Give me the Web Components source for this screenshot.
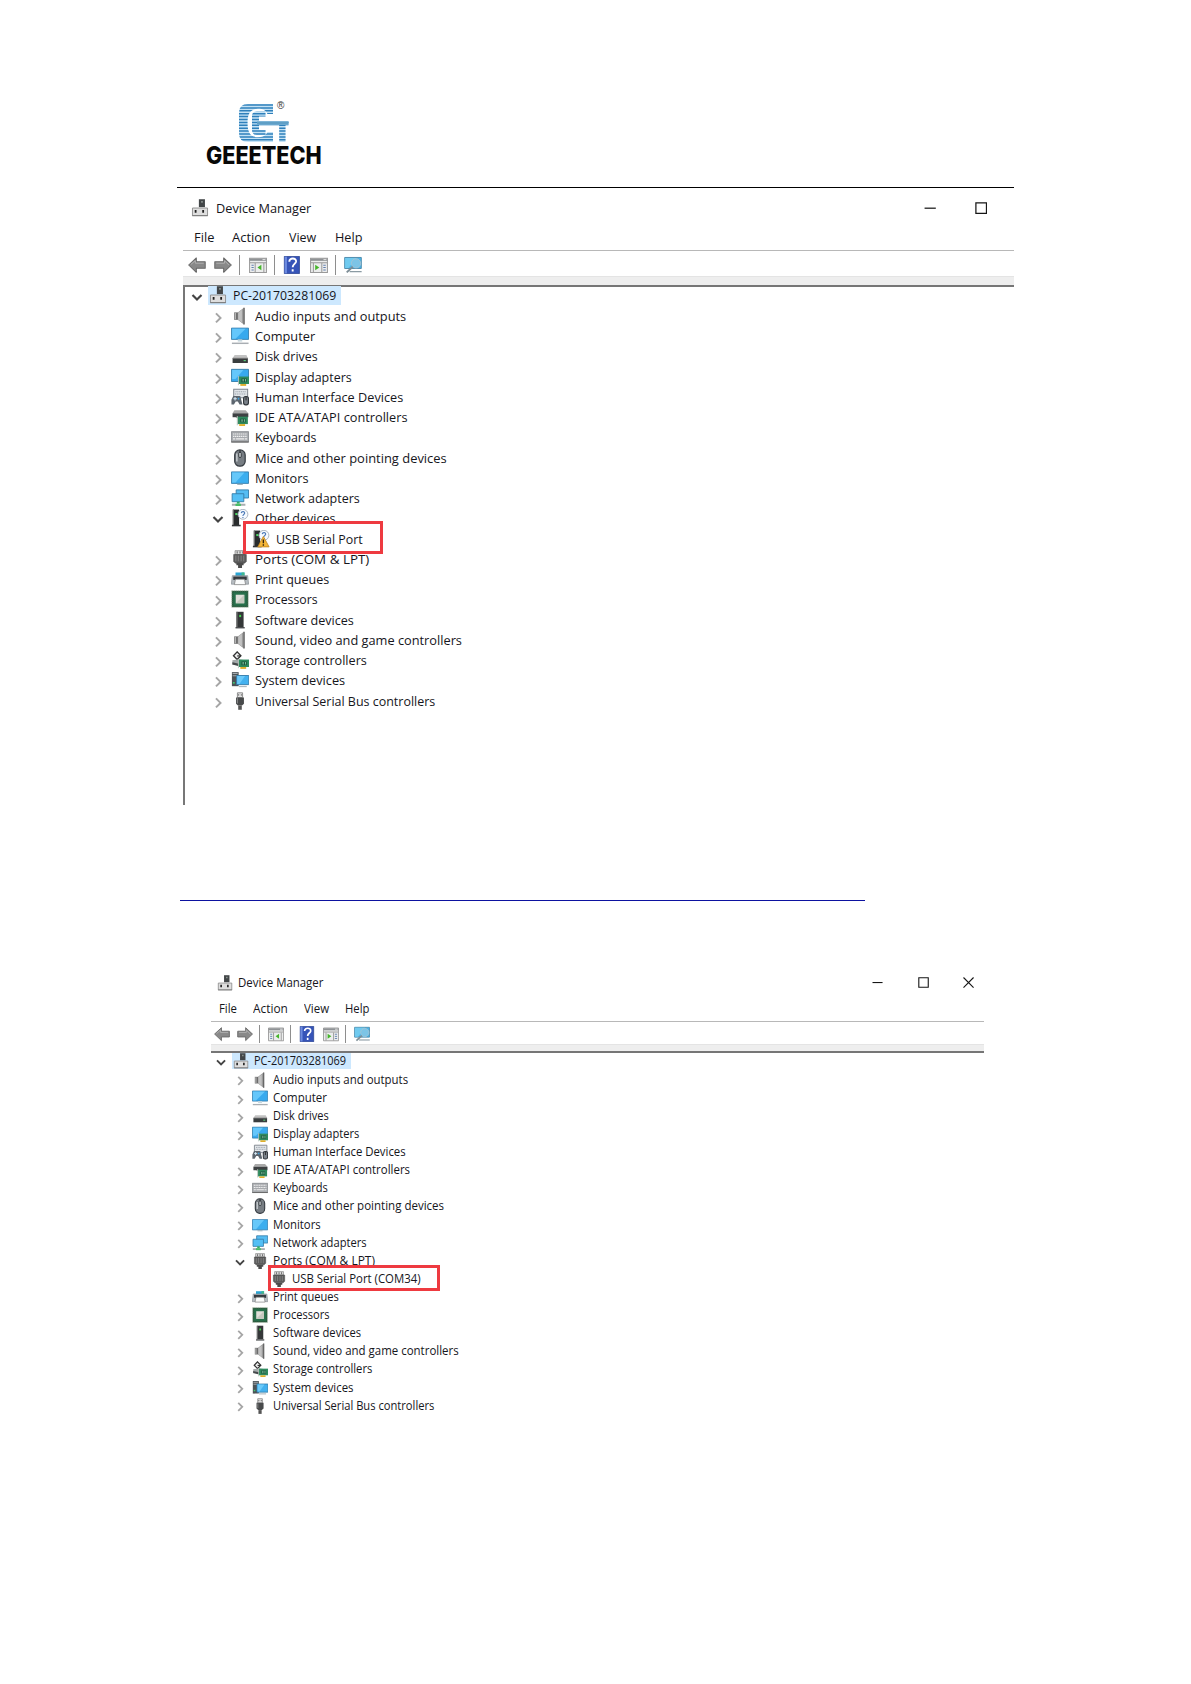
<!DOCTYPE html>
<html lang="en">
<head>
<meta charset="utf-8">
<title>Device Manager</title>
<style>
  body {
    margin: 0;
    background: #fff;
    font-family: "Open Sans", "Noto Sans", sans-serif;
    color: #16161c;
  }
</style>
</head>
<body>
<manual-page>
  <geeetech-logo slot="header"></geeetech-logo>
  <device-manager scale="1.1257" width="831" height="613.2" framed open="other"></device-manager>
  <link-rule></link-rule>
  <device-manager class="second" scale="1.0063" width="773" height="470" closable open="ports"></device-manager>
</manual-page>

<script>
(() => {
  "use strict";

  const svg = (body, box = "0 0 16 16") =>
    `<svg viewBox="${box}" aria-hidden="true">${body}</svg>`;

  const board = `
    <path d="M6.8 7.6h9.2v6.6H6.8z" fill="#2f8a5e"/>
    <path d="M6.6 7v8.300" stroke="#b9c4bb" stroke-width=".8"/>
    <path d="M9.300 9.300h4.700v3.300H9.300z" fill="#1c553d"/>
    <path d="M10.300 9.800h1v2.300h-1zM12.500 9.800h.8v2.300h-.8z" fill="#83c7a0"/>
    <path d="M8.300 14.200h5.200v1.700H8.300z" fill="#dfaf2c"/>`;

  const speaker = `
    <path d="M2.8 4.8h3.400v6.600H2.800z" fill="#6c6c6c"/>
    <path d="M3.300 5.200h1.200v5.800H3.300z" fill="#b5b5b5"/>
    <path d="M6 4.800L11.400.6v15L6 11.400z" fill="#9b9b9b"/>
    <path d="M6.400 5L9.700 2.400v11.400L6.400 11.200z" fill="#c2c2c2"/>
    <path d="M11.600.6v15" stroke="#666" stroke-width="1.300"/>`;

  const tower = `
    <path d="M1.6.5h5.6v14H1.6z" fill="#292c2d"/>
    <path d="M1.6.5h1v14h-1z" fill="#777"/>
    <path d="M3.8 3.6h1.9v1.8H3.8z" fill="#4cdb63"/>
    <path d="M.8 14h7.800v1.400H.8z" fill="#343638"/>`;

  const question = `
    <circle cx="10.6" cy="4.7" r="4.4" fill="#f6faff" stroke="#98a3b2" stroke-width=".7"/>
    <path d="M9.1 3.7c.2-2 3.4-1.8 3 .1-.2 1-1.5 1.1-1.5 2.4M10.6 7v1" fill="none" stroke="#4b79b7" stroke-width="1"/>`;

  const plug = `
    <path d="M3.600.6h8.800v3.400H3.600z" fill="#ddd" stroke="#777" stroke-width=".6"/>
    <path d="M5.5 1.2v2M8 1.2v2M10.5 1.2v2" stroke="#555" stroke-width=".8"/>
    <path d="M2.4 4h11.2v6.2l-1.5 1.5H3.9l-1.5-1.5z" fill="#5c5c5c" stroke="#444" stroke-width=".5"/>
    <path d="M4.3 5v5M6.5 5v5M9 5v5M11.3 5v5" stroke="#8c8c8c" stroke-width=".7"/>
    <path d="M4.800 11.6h6.400v2H9.8V16H6.3v-2.4H4.800z" fill="#4b4b4b"/>`;

  const icons = {
    computer: svg(`
      <path d="M7 .2h5.4v7H7z" fill="#424648"/>
      <path d="M9 1.8h1.5v1.5H9z" fill="#8b9390"/>
      <path d="M1.3 8h13.4v6.8H1.3z" fill="#dedede" stroke="#8b8b8b" stroke-width=".8"/>
      <path d="M3.3 9.8h1.6v2.5H3.3zM10 9.8h1.6v2.5H10z" fill="#202020"/>
      <path d="M1 14.8h14" stroke="#777" stroke-width=".8"/>`),
    speaker: svg(speaker),
    screen: svg(`
      <path d="M.4 1h15.2v10H.4z" fill="#38a9ee" stroke="#377fae" stroke-width=".8"/>
      <path d="M1 1.5h12L4 10.5H1z" fill="#65c7fb"/>
      <path d="M6 11h4v2H6z" fill="#c8d8df"/>
      <path d="M.8 14.5h14.8" stroke="#a9aeb3" stroke-width="1.3"/>`),
    disk: svg(`
      <path d="M3.2 7.2h10.5L15 10H1.4z" fill="#c2c2c2"/>
      <path d="M1.4 10H15v4.2H1.4z" fill="#393d3e"/>
      <path d="M11.2 11.6h2v1h-2z" fill="#59d37d"/>
      <path d="M1.4 10H15" stroke="#777" stroke-width=".7"/>`),
    display: svg(`
      <path d="M.4 1.2h15.2V12H.4z" fill="#38a9ee" stroke="#327ca9" stroke-width=".8"/>
      <path d="M1 1.7h10l-7 8H1z" fill="#65c7fb"/>${board}`),
    hid: svg(`
      <path d="M2.4 1.2h12.400v7.400H2.4z" fill="#e1e5e9" stroke="#7e858d" stroke-width=".9"/>
      <path d="M4 3.4h9.500M3.5 5.3h10" stroke="#9aa2ab" stroke-width=".9" stroke-dasharray="1 .6"/>
      <path d="M.4 14.700V10.4L2 7h6.200l2 7.700H7.6L6.1 12H4.2L2.6 14.700z" fill="#5d666f"/>
      <path d="M3.6 8v3M2.2 9.5h3" stroke="#d7ebf8" stroke-width=".9"/>
      <path d="M6 8.7h1.4v1.6H6z" fill="#41a6e2"/>
      <rect x="11.2" y="7.5" width="4.300" height="7.5" rx="1.8" fill="#7b828a" stroke="#30353a" stroke-width="1"/>
      <path d="M13.4 8v3" stroke="#222" stroke-width=".8"/>`),
    ide: svg(`
      <path d="M3 2h10l2.4 2.7H1.4z" fill="#aaa"/>
      <path d="M1.4 4.7h14v3.5H1.4z" fill="#3e4143"/>
      <path d="M4 8h5l-2 2z" fill="#777"/>
      <g transform="translate(-1 .1)">${board}</g>`),
    keyboard: svg(`
      <path d="M.3 3.3h15.4v9.2H.3z" fill="#a8abaf" stroke="#83878b" stroke-width=".8"/>
      <path d="M1.8 5.3h12.5M1.8 7.4h12.5" stroke="#f0f0f0" stroke-width="1" stroke-dasharray="1.2 .5"/>
      <path d="M1.8 9.7h2M4.5 9.7h7.3M12.4 9.7h2" stroke="#f0f0f0" stroke-width="1"/>
      <path d="M.3 12.4h15.4" stroke="#6c6c6c" stroke-width="1"/>`),
    mouse: svg(`
      <rect x="3.3" y=".8" width="9.3" height="14.5" rx="4.5" fill="#777d83" stroke="#353b41" stroke-width="1.1"/>
      <path d="M5.2 4v7" stroke="#c9ced2" stroke-width="1.3"/>
      <path d="M8 1v6.5" stroke="#24282b" stroke-width="1"/>
      <rect x="6.9" y="3" width="2.2" height="4.5" rx="1" fill="#c8cdd0" stroke="#22272b" stroke-width=".7"/>`),
    monitor: svg(`
      <path d="M.4 2.6h15.2v10.2H.4z" fill="#3caeef" stroke="#377fae" stroke-width=".8"/>
      <path d="M1 3.1h11l-8 9H1z" fill="#66c8fa"/>
      <path d="M5.5 13.7h5" stroke="#9fb2bc" stroke-width="1"/>`),
    network: svg(`
      <path d="M4.6.8h11V8h-11z" fill="#55bdf3" stroke="#347da9" stroke-width=".8"/>
      <path d="M1 4.2h10.4v7.1H1z" fill="#54bff5" stroke="#347da9" stroke-width=".8"/>
      <path d="M5.2 11.3h2.5v1.8H5.2z" fill="#32ad69"/>
      <path d="M.8 14h12" stroke="#a9aeb1" stroke-width="1.8"/>
      <path d="M4 13.1h4.8v2H4z" fill="#49bd66"/>`),
    other: svg(tower + question),
    unknown: svg(`${tower}${question}
      <path d="M10.1 5.7L15.2 15H5.1z" fill="#f5b638" stroke="#bd811d" stroke-width=".7" stroke-linejoin="round"/>
      <path d="M10.1 8.5v3.2M10.1 12.7v1.2" stroke="#30230d" stroke-width="1.2"/>`),
    plug: svg(plug),
    printer: svg(`
      <path d="M4 2.200h8v3.300H4z" fill="#29a4d3"/>
      <path d="M9.4 2.200h2.6v3.300H9.4z" fill="#40b98b"/>
      <path d="M1.200 5h13.600l.9 7.600H.3z" fill="#b7bdc2" stroke="#858b91" stroke-width=".6"/>
      <path d="M2 5.800h12v3H2z" fill="#34393e"/>
      <path d="M4 8.200h8l1 4.800H3z" fill="#fbfcfc" stroke="#777" stroke-width=".6"/>`),
    cpu: svg(`
      <rect x="1.4" y="1.4" width="13.2" height="13.2" fill="#28704b" stroke="#285b3d" stroke-width="1.4"/>
      <rect x=".7" y=".7" width="14.6" height="14.6" fill="none" stroke="#a7b29b" stroke-width=".7" stroke-dasharray=".8 1"/>
      <path d="M4.2 4.2h7.6v7.6H4.2z" fill="#e1dfd9"/>
      <path d="M11.8 4.2v7.6H4.2z" fill="#c6c9bf"/>`),
    software: svg(`
      <path d="M4.8.7h6.4v13.5H4.8z" fill="#343738"/>
      <path d="M4.8.7h1v13.5h-1z" fill="#777"/>
      <path d="M7.3 3.4H9v2H7.3z" fill="#42d34e"/>
      <path d="M4 14.2h8.2v1.3H4z" fill="#4c4e50"/>`),
    storage: svg(`
      <path d="M5.5.8l3.3 3.4-3.3 3.4L2.2 4.2z" fill="#eee" stroke="#333" stroke-width="1.2"/>
      <path d="M5.5 4.4h3" stroke="#333" stroke-width="1.1"/>
      <path d="M1.200 8.3l5.800-1 6.8 1.2v2.8L1.200 12.2z" fill="#a4a9ab"/>
      <path d="M1.200 10l6.800 1.500v2.2l-6.800-1.8z" fill="#45494b"/>${board}`),
    system: svg(`
      <path d="M.8 1h6v12.5h-6z" fill="#4c5357"/>
      <path d="M1.4 2.3h4.5M1.4 4.2h4.5" stroke="#a3abb0" stroke-width=".9"/>
      <path d="M1.7 9.8h1.6v1.4H1.7z" fill="#41c872"/>
      <path d="M5 4h10.8v8.1H5z" fill="#43b1ef" stroke="#347ca8" stroke-width=".8"/>
      <path d="M5.5 4.5h7l-5 7h-2z" fill="#6bcafa"/>
      <path d="M7 13.8h7" stroke="#aeb8be" stroke-width="1.1"/>`),
    usb: svg(`
      <path d="M5.7.7h4.6v4.2H5.7z" fill="#e2e2e2" stroke="#777" stroke-width=".7"/>
      <path d="M6.8 2v1.2M9.2 2v1.2" stroke="#555" stroke-width=".8"/>
      <path d="M4.5 4.8h7v5.7L9.8 12H6.2l-1.7-1.5z" fill="#484a4b"/>
      <path d="M5.8 5.5v4.6" stroke="#8c8c8c" stroke-width=".8"/>
      <path d="M6.4 12h3.2v3.8H6.4z" fill="#555"/>`),
    back: svg(`<path d="M.6 8l6.8-6.3v3.5h7.9v5.7H7.4v3.6z" fill="#898989" stroke="#696969" stroke-width=".9" stroke-linejoin="round"/>
      <path d="M2.5 7.6l4-3.5v2.3H14" fill="none" stroke="#b4b4b4" stroke-width=".8"/>`),
    forward: svg(`<path d="M15.4 8L8.6 1.7v3.5H.7v5.7h7.9v3.6z" fill="#898989" stroke="#696969" stroke-width=".9" stroke-linejoin="round"/>
      <path d="M2 6.4h7.3V4.2L13.3 8" fill="none" stroke="#b4b4b4" stroke-width=".8"/>`),
    tree: svg(`
      <path d="M.5 2h15v12.7H.5z" fill="#eceded" stroke="#9a9a9a" stroke-width=".9"/>
      <path d="M.5 2.3h15v2H.5z" fill="#8f9295"/>
      <path d="M12 3.2h2.6" stroke="#eee" stroke-width=".8"/>
      <path d="M.8 6h14.4M5.5 6.5v8M13.2 6.5v8" stroke="#999" stroke-width=".9"/>
      <path d="M2.2 8.2h2M2.2 10.3h2M2.2 12.4h2" stroke="#627fae" stroke-width=".9"/>
      <path d="M11 7.7v5L7.5 10.2z" fill="#46b52c"/>`),
    help: svg(`
      <path d="M1.2.3h13.4v15.4H1.2z" fill="#3654b8" stroke="#27408d" stroke-width=".7"/>
      <path d="M1.5.6h2v14.8h-2z" fill="#6c8be0"/>
      <path d="M5.6 5c0-3.8 6.4-3.6 6 0-.3 2-3 2.2-3 5M8.6 11.8v2" fill="none" stroke="#fff" stroke-width="1.7"/>`),
    pane: svg(`
      <path d="M.5 2h15v12.7H.5z" fill="#eceded" stroke="#9a9a9a" stroke-width=".9"/>
      <path d="M.5 2.3h15v2H.5z" fill="#8f9295"/>
      <path d="M12 3.2h2.6" stroke="#eee" stroke-width=".8"/>
      <path d="M.8 6h14.4M3 6.5v8M10.5 6.5v8" stroke="#999" stroke-width=".9"/>
      <path d="M11.8 8.2h2.2M11.8 10.3h2.2M11.8 12.4h2.2" stroke="#627fae" stroke-width=".9"/>
      <path d="M4.6 7.7v5l3.7-2.5z" fill="#46b52c"/>`),
    scan: svg(`
      <path d="M.6 1.3h14.8v9.8H.6z" fill="#4bb5e8" stroke="#4887a8" stroke-width=".8"/>
      <path d="M1 1.7h10L4 10.7H1z" fill="#70caef"/>
      <path d="M5 13.9h10.7" stroke="#8b9ba3" stroke-width="1.1"/>
      <circle cx="10.7" cy="6.5" r="4.1" fill="#7cc4e6" stroke="#a5c3d3" stroke-width=".8"/>
      <path d="M7.8 9.5l-5.4 5.1" stroke="#7d8d96" stroke-width="1.7"/>`),
  };

  // label, icon, drawn label width in native pixels
  const devices = [
    ["Audio inputs and outputs", "speaker", 134.6],
    ["Computer", "screen", 53.8],
    ["Disk drives", "disk", 55.5],
    ["Display adapters", "display", 85.9],
    ["Human Interface Devices", "hid", 132],
    ["IDE ATA/ATAPI controllers", "ide", 135.8],
    ["Keyboards", "keyboard", 54.8],
    ["Mice and other pointing devices", "mouse", 170],
    ["Monitors", "monitor", 47.6],
    ["Network adapters", "network", 93],
    ["Other devices", "other", 71.8],
    ["Ports (COM & LPT)", "plug", 101.5],
    ["Print queues", "printer", 65.9],
    ["Processors", "cpu", 55.8],
    ["Software devices", "software", 87.9],
    ["Sound, video and game controllers", "speaker", 184.2],
    ["Storage controllers", "storage", 99],
    ["System devices", "system", 79.7],
    ["Universal Serial Bus controllers", "usb", 160],
  ];

  const escape = (text) => text.replace(/&/g, "&amp;");

  // Text condensed or widened to a fixed width, given in --u units.
  class FitText extends HTMLElement {
    connectedCallback() {
      if (this.shadowRoot) return;
      this.attachShadow({ mode: "open" }).innerHTML = `
        <style>
          :host {
            display: block;
            flex: none;
            width: calc(var(--u, 1px) * ${this.getAttribute("width")});
            white-space: nowrap;
          }
          span { display: inline-block; transform-origin: 0 50%; }
        </style>
        <span><slot></slot></span>`;
      const span = this.shadowRoot.querySelector("span");
      const ratio = this.getBoundingClientRect().width / span.offsetWidth;
      if (Number.isFinite(ratio)) span.style.transform = `scaleX(${ratio.toFixed(4)})`;
    }
  }

  class DeviceIcon extends HTMLElement {
    connectedCallback() {
      if (this.shadowRoot) return;
      this.attachShadow({ mode: "open" }).innerHTML = `
        <style>
          :host {
            display: block;
            flex: none;
            width: calc(var(--u) * 16);
            height: calc(var(--u) * 16);
          }
          svg { display: block; width: 100%; height: 100%; }
        </style>
        ${icons[this.getAttribute("name")]}`;
    }
  }

  class DeviceRow extends HTMLElement {
    connectedCallback() {
      if (this.shadowRoot) return;
      const depth = Number(this.getAttribute("depth"));
      const state = this.getAttribute("state");
      const mark = this.getAttribute("mark");
      const chevrons = {
        open: `<path d="M4 6.3l4 4 4-4" fill="none" stroke="#444" stroke-width="1.9"/>`,
        closed: `<path d="M6.2 4.8l4 4-4 4" fill="none" stroke="#a6a6a6" stroke-width="1.8"/>`,
        leaf: "",
      };
      this.attachShadow({ mode: "open" }).innerHTML = `
        <style>
          :host {
            position: relative;
            display: flex;
            align-items: center;
            height: calc(var(--u) * 18);
            padding-left: calc(var(--u) * ${2.3 + depth * 19});
          }
          .chevron {
            flex: none;
            width: calc(var(--u) * 16);
            height: calc(var(--u) * 16);
            margin-right: calc(var(--u) * 2.1);
          }
          .item {
            display: flex;
            align-items: center;
            gap: calc(var(--u) * 5.4);
            height: calc(var(--u) * 16.2);
            margin-bottom: calc(var(--u) * 1.6);
            padding: 0 calc(var(--u) * 4) 0 calc(var(--u) * 1.2);
          }
          :host([selected]) .item {
            margin-bottom: calc(var(--u) * 2.2);
            background: #cde8fe;
          }
          :host([mark]) .item { position: relative; z-index: 2; }
          .mark {
            position: absolute;
            z-index: 1;
            box-sizing: border-box;
            left: calc(var(--u) * var(--x));
            top: calc(var(--u) * var(--y));
            width: calc(var(--u) * var(--w));
            height: calc(var(--u) * var(--h));
            border: 3px solid #ee3a40;
            background: #fff;
          }
          .unknown { --x: 51.2; --y: -7.3; --w: 124.3; --h: 29; }
          .port { --x: 57.1; --y: -5.5; --w: 170.5; --h: 25.8; }
        </style>
        ${mark ? `<div class="mark ${mark}"></div>` : ""}
        <svg class="chevron" viewBox="0 0 16 16" aria-hidden="true">${chevrons[state]}</svg>
        <div class="item">
          <device-icon name="${this.getAttribute("icon")}"></device-icon>
          <fit-text width="${this.getAttribute("width")}"><slot></slot></fit-text>
        </div>`;
    }
  }

  class WindowButtons extends HTMLElement {
    connectedCallback() {
      if (this.shadowRoot) return;
      const closable = this.hasAttribute("closable");
      this.attachShadow({ mode: "open" }).innerHTML = `
        <style>
          :host {
            display: flex;
            align-items: center;
            gap: calc(var(--u) * ${closable ? 34.3 : 34});
            margin-left: auto;
            padding-right: calc(var(--u) * ${closable ? 9.8 : 23.8});
          }
          svg { display: block; width: calc(var(--u) * 11); height: calc(var(--u) * 11); }
          path { fill: none; stroke: #161616; stroke-width: 1.1; }
        </style>
        ${svg(`<path d="M.5 5.5h10"/>`, "0 0 11 11")}
        ${svg(`<path d="M.8.8h9.4v9.4H.8z"/>`, "0 0 11 11")}
        ${closable ? svg(`<path d="M.5.5l10 10M10.5.5l-10 10"/>`, "0 0 11 11") : ""}`;
    }
  }

  class DeviceManager extends HTMLElement {
    connectedCallback() {
      if (this.shadowRoot) return;
      const framed = this.hasAttribute("framed");
      const closable = this.hasAttribute("closable");
      const open = this.getAttribute("open");
      const inset = framed ? "2px" : "0px";

      const row = (label, icon, width, depth, state, extra = "") => `
        <device-row depth="${depth}" icon="${icon}" width="${width}" state="${state}" ${extra}>${escape(label)}</device-row>`;

      const rows = devices
        .filter(([, icon]) => icon !== "other" || open === "other")
        .map(([label, icon, width]) => {
          if (icon === "other") {
            return row(label, icon, width, 1, "open")
              + row("USB Serial Port", "unknown", 76.7, 2, "leaf", 'mark="unknown"');
          }
          if (icon === "plug" && open === "ports") {
            return row(label, icon, width, 1, "open")
              + row("USB Serial Port (COM34)", "plug", 127.6, 2, "leaf", 'mark="port"');
          }
          return row(label, icon, width, 1, "closed");
        })
        .join("");

      this.attachShadow({ mode: "open" }).innerHTML = `
        <style>
          :host {
            --u: ${this.getAttribute("scale")}px;
            display: flex;
            flex-direction: column;
            box-sizing: border-box;
            width: ${this.getAttribute("width")}px;
            height: ${this.getAttribute("height")}px;
            font-size: calc(var(--u) * 12);
            line-height: calc(var(--u) * 16);
          }
          .title, .menu, .tools {
            display: flex;
            flex: none;
            align-items: center;
            box-sizing: border-box;
            padding-left: ${inset};
          }
          .title { height: calc(var(--u) * 28.8); }
          .title device-icon { margin: 0 calc(var(--u) * 5.5) calc(var(--u) * .8) calc(var(--u) * 5.7); }
          .menu {
            height: calc(var(--u) * 23.3);
            gap: calc(var(--u) * 16.2);
            padding-left: calc(var(--u) * 8 + ${inset});
          }
          .menu :nth-child(3) { margin-left: calc(var(--u) * .3); }
          .tools {
            height: calc(var(--u) * 23.1);
            border-top: 1px solid #b8b8b8;
            padding-left: calc(var(--u) * 2.7 + ${inset});
            padding-top: calc(var(--u) * 2.4);
          }
          .tools device-icon + device-icon { margin-left: calc(var(--u) * 6.9); }
          .tools device-icon:nth-of-type(5) { margin-left: calc(var(--u) * 7.4); }
          .tools i {
            width: 1px;
            height: calc(var(--u) * 18);
            margin: 0 calc(var(--u) * 7.6) 0 calc(var(--u) * 6.4);
            background: #8e8e8e;
          }
          .band {
            flex: none;
            height: calc(var(--u) * 7.2);
            background: #eee;
            border-top: 1px solid #e4e4e4;
            box-sizing: border-box;
          }
          .view {
            flex: 1;
            border-top: 2px solid #767676;
            border-left: ${framed ? "2px solid #777" : "0"};
          }
        </style>
        <div class="title">
          <device-icon name="computer"></device-icon>
          <fit-text width="84.7">Device Manager</fit-text>
          <window-buttons ${closable ? "closable" : ""}></window-buttons>
        </div>
        <div class="menu">
          <fit-text width="17.8">File</fit-text>
          <fit-text width="34.2">Action</fit-text>
          <fit-text width="24.6">View</fit-text>
          <fit-text width="24.2">Help</fit-text>
        </div>
        <div class="tools">
          <device-icon name="back"></device-icon>
          <device-icon name="forward"></device-icon>
          <i></i>
          <device-icon name="tree"></device-icon>
          <i></i>
          <device-icon name="help"></device-icon>
          <device-icon name="pane"></device-icon>
          <i></i>
          <device-icon name="scan"></device-icon>
        </div>
        <div class="band"></div>
        <div class="view">
          ${row("PC-201703281069", "computer", 92, 0, "open", "selected")}
          ${rows}
        </div>`;
    }
  }

  class GeeetechLogo extends HTMLElement {
    connectedCallback() {
      if (this.shadowRoot) return;
      const lines = Array.from({ length: 14 }, (_, i) =>
        `<path d="M0 ${(i * 2.9 + 1).toFixed(1)}h50" stroke="#2f80bb" stroke-width="1.5"/>`).join("");
      this.attachShadow({ mode: "open" }).innerHTML = `
        <style>
          :host { display: block; width: 116px; }
          .mark { display: flex; padding-left: 33px; height: 39px; }
          svg { display: block; width: 50px; height: 39px; }
          sup {
            margin: -3px 0 0 -12px;
            font: 10px/10px "Liberation Sans", sans-serif;
            color: #333;
          }
          .name {
            margin-top: 2px;
            font: 800 24px/22px "Inter", "Liberation Sans", sans-serif;
            color: #080808;
          }
        </style>
        <div class="mark">
          <svg viewBox="0 0 50 39" aria-hidden="true">
            <clipPath id="shape">
              <path d="M9 0h19l2.500-1h3.500v11h-5.500C27 6.500 24 4.800 19 4.800 11 4.800 8.500 10 8.500 19s2.500 14.200 10.500 14.200c5 0 8-1.700 9.500-5.200H34v10H9c-6 0-9-3-9-9V9c0-6 3-9 9-9z"/>
              <path d="M18 7.500h8.500v5H20v4.500h29.500v4.200H46.500V38h-6.300V21.200H20V26h6.500v5H18c-3.500 0-5-2-5-5V12.500c0-3 1.500-5 5-5z"/>
            </clipPath>
            <g clip-path="url(#shape)">
              <path d="M0 0h50v39H0z" fill="#c4e2f5"/>${lines}
              <path d="M18 19h32" stroke="#5f9fc6" stroke-width="2.8"/>
            </g>
          </svg>
          <sup>®</sup>
        </div>
        <fit-text class="name" width="116">GEEETECH</fit-text>`;
    }
  }

  // Underline of an empty hyperlink.
  class LinkRule extends HTMLElement {
    connectedCallback() {
      if (this.shadowRoot) return;
      this.attachShadow({ mode: "open" }).innerHTML = `
        <style>
          :host { display: block; width: 685px; height: 1px; background: #0c12a0; }
        </style>`;
    }
  }

  class ManualPage extends HTMLElement {
    connectedCallback() {
      if (this.shadowRoot) return;
      this.attachShadow({ mode: "open" }).innerHTML = `
        <style>
          :host {
            display: block;
            box-sizing: border-box;
            width: 1191px;
            height: 1684px;
            padding: 104px 177px 0;
            overflow: hidden;
          }
          header {
            box-sizing: border-box;
            height: 84px;
            padding-left: 29px;
            border-bottom: 1px solid #000;
          }
          ::slotted(device-manager) { margin: 3.8px 0 0 6px; }
          ::slotted(link-rule) { margin: 95px 0 0 3px; }
          ::slotted(.second) { margin: 67.5px 0 0 34px; }
        </style>
        <header><slot name="header"></slot></header>
        <slot></slot>`;
    }
  }

  customElements.define("manual-page", ManualPage);
  customElements.define("geeetech-logo", GeeetechLogo);
  customElements.define("link-rule", LinkRule);
  customElements.define("device-manager", DeviceManager);
  customElements.define("window-buttons", WindowButtons);
  customElements.define("device-row", DeviceRow);
  customElements.define("device-icon", DeviceIcon);
  customElements.define("fit-text", FitText);
})();
</script>
</body>
</html>
